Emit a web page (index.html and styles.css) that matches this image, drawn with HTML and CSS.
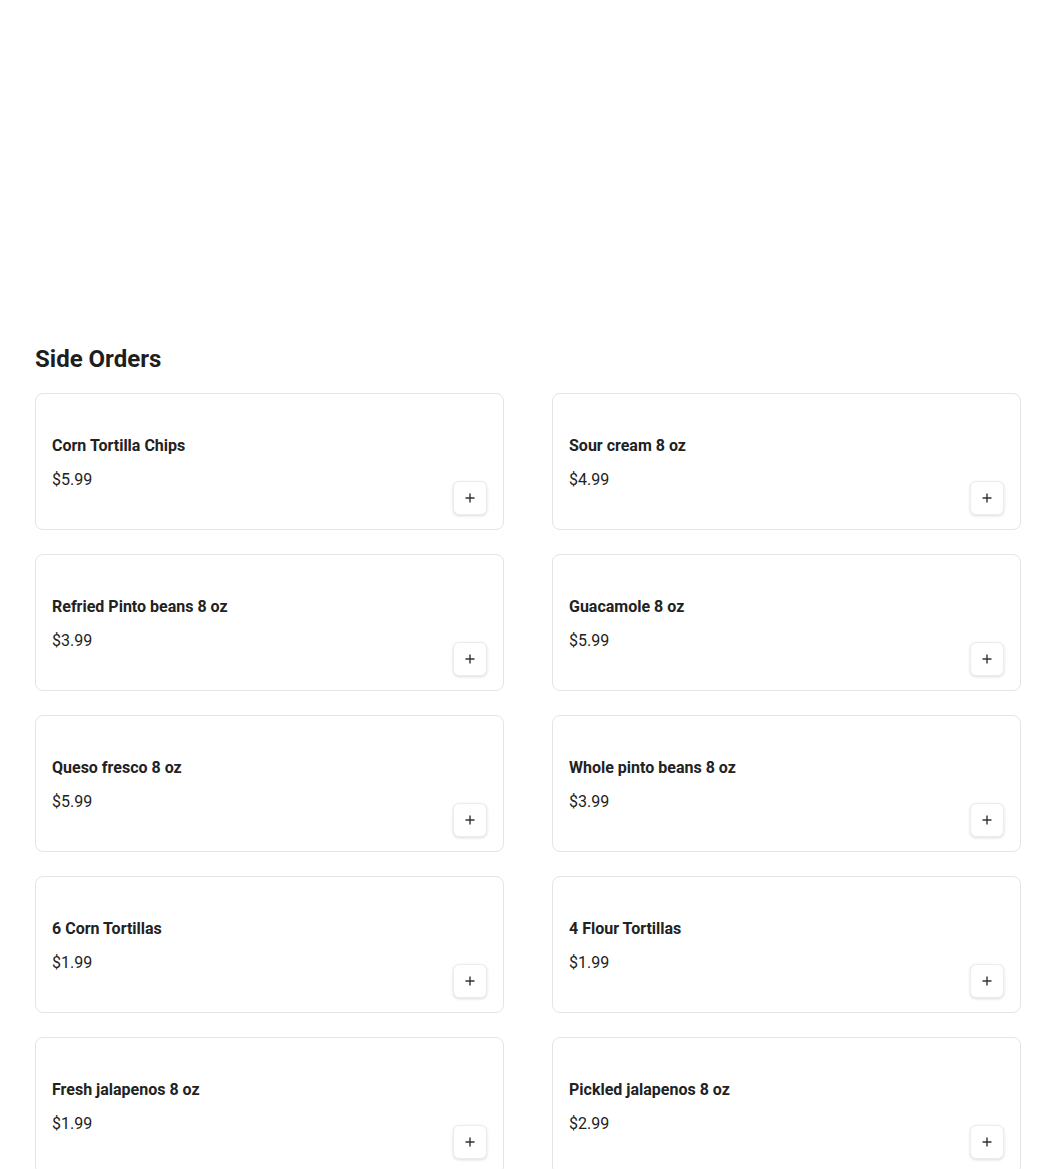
FILE: index.html
```html
<!DOCTYPE html>
<html>
<head>
<meta charset="utf-8">
<link rel="stylesheet" href="styles.css">
</head>
<body>
<main class="page">
  <section class="menu-section">
    <h2 class="section-title">Side Orders</h2>
    <div class="grid">
      <div class="card"><div class="info"><div class="name">Corn Tortilla Chips</div><div class="price">$5.99</div></div><button class="add"><svg viewBox="0 0 12 12" width="12" height="12"><path d="M6 1.5v9M1.5 6h9" stroke="#333" stroke-width="1.4"/></svg></button></div>
      <div class="card"><div class="info"><div class="name">Sour cream 8 oz</div><div class="price">$4.99</div></div><button class="add"><svg viewBox="0 0 12 12" width="12" height="12"><path d="M6 1.5v9M1.5 6h9" stroke="#333" stroke-width="1.4"/></svg></button></div>
      <div class="card"><div class="info"><div class="name">Refried Pinto beans 8 oz</div><div class="price">$3.99</div></div><button class="add"><svg viewBox="0 0 12 12" width="12" height="12"><path d="M6 1.5v9M1.5 6h9" stroke="#333" stroke-width="1.4"/></svg></button></div>
      <div class="card"><div class="info"><div class="name">Guacamole 8 oz</div><div class="price">$5.99</div></div><button class="add"><svg viewBox="0 0 12 12" width="12" height="12"><path d="M6 1.5v9M1.5 6h9" stroke="#333" stroke-width="1.4"/></svg></button></div>
      <div class="card"><div class="info"><div class="name">Queso fresco 8 oz</div><div class="price">$5.99</div></div><button class="add"><svg viewBox="0 0 12 12" width="12" height="12"><path d="M6 1.5v9M1.5 6h9" stroke="#333" stroke-width="1.4"/></svg></button></div>
      <div class="card"><div class="info"><div class="name">Whole pinto beans 8 oz</div><div class="price">$3.99</div></div><button class="add"><svg viewBox="0 0 12 12" width="12" height="12"><path d="M6 1.5v9M1.5 6h9" stroke="#333" stroke-width="1.4"/></svg></button></div>
      <div class="card"><div class="info"><div class="name">6 Corn Tortillas</div><div class="price">$1.99</div></div><button class="add"><svg viewBox="0 0 12 12" width="12" height="12"><path d="M6 1.5v9M1.5 6h9" stroke="#333" stroke-width="1.4"/></svg></button></div>
      <div class="card"><div class="info"><div class="name">4 Flour Tortillas</div><div class="price">$1.99</div></div><button class="add"><svg viewBox="0 0 12 12" width="12" height="12"><path d="M6 1.5v9M1.5 6h9" stroke="#333" stroke-width="1.4"/></svg></button></div>
      <div class="card"><div class="info"><div class="name">Fresh jalapenos 8 oz</div><div class="price">$1.99</div></div><button class="add"><svg viewBox="0 0 12 12" width="12" height="12"><path d="M6 1.5v9M1.5 6h9" stroke="#333" stroke-width="1.4"/></svg></button></div>
      <div class="card"><div class="info"><div class="name">Pickled jalapenos 8 oz</div><div class="price">$2.99</div></div><button class="add"><svg viewBox="0 0 12 12" width="12" height="12"><path d="M6 1.5v9M1.5 6h9" stroke="#333" stroke-width="1.4"/></svg></button></div>
    </div>
  </section>
</main>
</body>
</html>
```
FILE: styles.css
```css
* { box-sizing: border-box; }
html, body { margin: 0; padding: 0; background: #fff; }
body {
  font-family: Roboto, "Noto Sans", Arial, sans-serif;
  color: #1e1e1e;
}
.page {
  padding: 343px 0 40px 35px;
}
.section-title {
  margin: 0 0 18px;
  font-size: 24px;
  line-height: 32px;
  font-weight: 700;
  color: #1e1e1e;
}
.grid {
  width: 986px;
  display: grid;
  grid-template-columns: 469px 469px;
  column-gap: 48px;
  row-gap: 24px;
}
.card {
  height: 137px;
  border: 1px solid #e4e4e4;
  border-radius: 8px;
  padding: 16px 16px 14px 16px;
  display: flex;
  justify-content: space-between;
  align-items: flex-end;
  background: #fff;
}
.info {
  align-self: flex-start;
  padding-top: 24px;
  display: flex;
  flex-direction: column;
  gap: 10px;
}
.name {
  font-size: 16px;
  line-height: 24px;
  font-weight: 700;
  color: #222;
}
.price {
  font-size: 16px;
  line-height: 24px;
  font-weight: 400;
  color: #222;
}
.add {
  width: 34px;
  height: 34px;
  border: 1px solid #ececec;
  border-radius: 6px;
  background: #fff;
  box-shadow: 0 1px 3px rgba(0,0,0,0.14);
  padding: 0;
  display: flex;
  align-items: center;
  justify-content: center;
  margin-right: 0;
}
.add svg { display: block; }
```
